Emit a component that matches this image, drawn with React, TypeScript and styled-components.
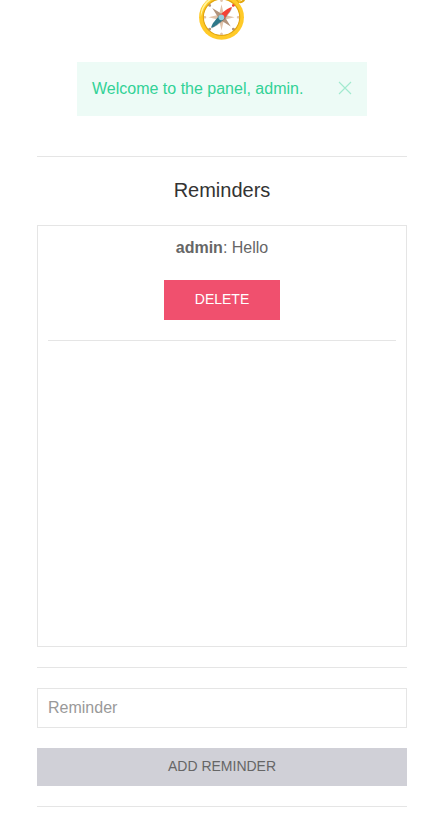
import React from 'react';
import styled, { createGlobalStyle } from 'styled-components';

const GlobalStyle = createGlobalStyle`
  * { box-sizing: border-box; }
  body {
    margin: 0;
    background: #fff;
    color: #666;
    font-family: "Liberation Sans", Arial, sans-serif;
    font-size: 16px;
    line-height: 24px;
  }
`;

const Page = styled.main`
  width: 370px;
  height: 817px;
  margin: 0 auto;
  overflow: hidden;
  text-align: center;
`;

const LogoBar = styled.header`
  height: 62px;
  display: flex;
  justify-content: center;
  align-items: flex-end;
`;

const Logo = styled.div`
  flex: none;
  padding-bottom: 20px;
  font-size: 42px;
  line-height: 50px;
`;

const Alert = styled.div`
  display: flex;
  align-items: center;
  justify-content: space-between;
  width: 290px;
  height: 54px;
  margin: 0 auto 40px;
  padding: 15px;
  background: #edfbf6;
  color: #32d296;
`;

const CloseButton = styled.button`
  display: block;
  width: 14px;
  height: 14px;
  margin-top: -2px;
  padding: 0;
  border: 0;
  background: none;
  color: inherit;
  opacity: 0.4;
  svg { display: block; }
`;

const Divider = styled.hr`
  height: 1px;
  margin: 0 0 20px;
  border: 0;
  background: #e5e5e5;
`;

const Title = styled.h4`
  margin: 0 0 20px;
  padding-bottom: 2px;
  color: #333;
  font-size: 20px;
  font-weight: 400;
  line-height: 26px;
`;

const ReminderList = styled.section`
  height: 422px;
  margin-bottom: 20px;
  padding: 10px;
  border: 1px solid #e5e5e5;
`;

const ReminderText = styled.p`
  margin: 0 0 20px;
`;

const Button = styled.button<{ $danger?: boolean }>`
  display: block;
  width: ${({ $danger }) => ($danger ? '116px' : '100%')};
  margin: 0 auto 20px;
  padding: 0 0 2px;
  border: ${({ $danger }) => ($danger ? '1px solid transparent' : '0')};
  background: ${({ $danger }) => ($danger ? '#f0506e' : '#d0d0d7')};
  color: ${({ $danger }) => ($danger ? '#fff' : '#666')};
  font: 14px/36px "Liberation Sans", Arial, sans-serif;
  text-transform: uppercase;
`;

const Input = styled.input`
  display: block;
  width: 100%;
  height: 40px;
  margin: 0 0 20px;
  padding: 0 10px;
  border: 1px solid #e5e5e5;
  border-radius: 0;
  background: #fff;
  color: #666;
  font: 16px "Liberation Sans", Arial, sans-serif;
  &::placeholder { color: #999; opacity: 1; }
`;

export default function App() {
  return (
    <>
      <GlobalStyle />
      <Page>
        <LogoBar><Logo>🧭</Logo></LogoBar>
        <Alert>
          <span>Welcome to the panel, admin.</span>
          <CloseButton aria-label="Close">
            <svg width="14" height="14" viewBox="0 0 14 14" fill="none" stroke="currentColor" strokeWidth="1.1">
              <path d="M1 1 13 13M13 1 1 13" />
            </svg>
          </CloseButton>
        </Alert>
        <Divider />
        <Title>Reminders</Title>
        <ReminderList>
          <ReminderText><strong>admin</strong>: Hello</ReminderText>
          <Button $danger>Delete</Button>
          <Divider />
        </ReminderList>
        <Divider />
        <Input placeholder="Reminder" />
        <Button>Add reminder</Button>
        <Divider />
      </Page>
    </>
  );
}
